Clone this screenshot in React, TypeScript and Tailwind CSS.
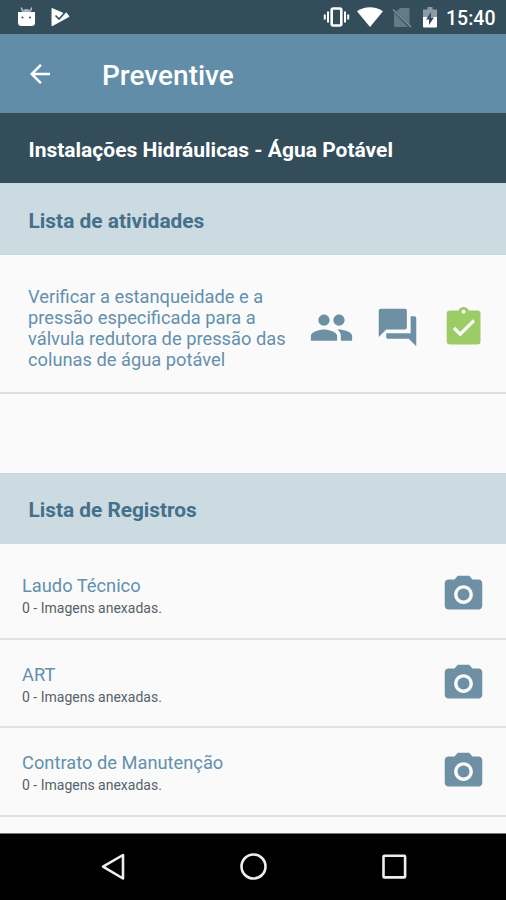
import { MdArrowBack, MdForum, MdPeople, MdPhotoCamera } from 'react-icons/md';

const records = ['Laudo Técnico', 'ART', 'Contrato de Manutenção'];

const AndroidHead = () => (
  <svg className="ml-[18px] h-[20px] w-[17px]" viewBox="0 0 17 20" fill="#fff">
    <path d="M3.300 .5 4.500 4M13.700 .5 12.500 4" stroke="#b9c4ca" strokeWidth="1.500" />
    <path d="M4 6a4.500 4 0 0 1 9 0z" fill="#a9b7be" />
    <path d="M0 5h17V15.500a3.500 3.500 0 0 1-3.500 3.500h-10A3.500 3.500 0 0 1 0 15.500z" />
    <circle cx="4.500" cy="10.500" r="1" fill="#334d5a" />
    <circle cx="12" cy="10.500" r="1" fill="#334d5a" />
  </svg>
);

const PlayCheck = () => (
  <svg className="ml-4 h-[20px] w-[19px]" viewBox="0 0 19 20">
    <path d="M1 1.500v17.300L18 9.500l-3-4-2.500 1z" fill="#fff" stroke="#fff" strokeWidth="1" strokeLinejoin="round" />
    <path d="m4.500 8.500 3.500 3.500 6.500-7" fill="none" stroke="#334d5a" strokeWidth="1.600" />
  </svg>
);

const ClipboardCheck = () => (
  <svg className="h-[45px] w-[45px]" viewBox="0 0 45 45">
    <path
      d="M9 5.600h8.400a5.600 5.600 0 0 1 10.400 0h8.400a3.300 3.300 0 0 1 3.300 3.300v27.300a3.300 3.300 0 0 1-3.300 3.300H9a3.300 3.300 0 0 1-3.300-3.300V8.900A3.300 3.300 0 0 1 9 5.600z"
      fill="#9ccc65"
    />
    <circle cx="22.600" cy="6.700" r="2" fill="#fafafa" />
    <path d="m13 23 6.200 6.200L33 15.500" fill="none" stroke="#fafafa" strokeWidth="3.300" />
  </svg>
);

const StatusBar = () => (
  <div className="flex h-[34px] shrink-0 items-center bg-[#334d5a] text-white">
    <AndroidHead />
    <PlayCheck />
    <div className="ml-auto flex items-center pr-[11px]">
      <svg className="h-[20px] w-[27px]" viewBox="0 0 27 20" fill="none" stroke="#fff">
        <rect x="8.700" y="1.500" width="9.600" height="17" rx="1.500" strokeWidth="2.600" />
        <path d="M5 4.500v11M22 4.500v11" strokeWidth="2" />
        <path d="M1.800 7.500v5M25.200 7.500v5" strokeWidth="2" />
      </svg>
      <svg className="ml-[7px] h-[20px] w-[26px]" viewBox="0 0 26 20" fill="#fff">
        <path d="M0 4.200C7.500-1.200 18.500-1.200 26 4.200L13 20z" />
      </svg>
      <svg className="ml-[9px] h-[21px] w-[20px]" viewBox="0 0 20 21">
        <path d="M8 1h8.500q1 0 1 1v15.500L4.500 4.500z" fill="#667a84" />
        <path d="M2 5.500 16 20H3q-1 0-1-1z" fill="#667a84" />
        <path d="m1 2.500 18 17.500" stroke="#7d8f98" strokeWidth="1.600" />
      </svg>
      <svg className="ml-[11px] h-[21px] w-[14px]" viewBox="0 0 14 21">
        <path d="M4.500 0h5v2.500H14V10H0V2.500h4.500z" fill="#8c9ca4" />
        <path d="M0 10h14v9.500q0 1-1 1H1q-1 0-1-1z" fill="#fff" />
        <path d="M8 5v5.500h3L6 18v-5.500H3z" fill="#334d5a" />
      </svg>
      <span className="ml-[9px] w-[49px] pt-[3px] text-[19.500px] font-medium leading-none whitespace-nowrap">15:40</span>
    </div>
  </div>
);

const NavigationBar = () => (
  <div className="flex h-[67px] shrink-0 items-center justify-center gap-[113px] border-t border-[#777] bg-black">
    <svg className="h-7 w-7" viewBox="0 0 28 28" fill="none" stroke="#eee" strokeWidth="2.600" strokeLinejoin="round">
      <path d="M25 2v23.500L5 13.700z" />
    </svg>
    <svg className="h-7 w-7" viewBox="0 0 28 28" fill="none" stroke="#eee" strokeWidth="2.600">
      <circle cx="14.500" cy="13.500" r="12" />
    </svg>
    <svg className="h-7 w-7" viewBox="0 0 28 28" fill="none" stroke="#eee" strokeWidth="2.600">
      <rect x="3.500" y="2.800" width="21.600" height="21.600" rx="1" />
    </svg>
  </div>
);

export default function App() {
  return (
    <div className="flex h-[900px] w-[506px] flex-col overflow-hidden bg-[#fafafa] font-[Roboto,sans-serif]">
      <StatusBar />

      {/* App bar */}
      <header className="flex h-[79px] shrink-0 items-center bg-[#628da8] pl-[25px] text-white">
        <MdArrowBack className="h-[30px] w-[30px]" />
        <h1 className="ml-[47px] pt-[4px] text-[28px] font-medium leading-none">Preventive</h1>
      </header>

      <div className="flex h-[70px] shrink-0 items-center bg-[#334d5a] pt-[5px] pl-[28.500px] text-[21px] font-bold text-white">
        <span>Instalações Hidráulicas - Água Potável</span>
      </div>

      {/* Activities */}
      <h2 className="flex h-[72px] shrink-0 items-center bg-[#ccdae1] pt-[5px] pl-[28.500px] text-[20.900px] font-bold text-[#44708c]">
        Lista de atividades
      </h2>
      <div className="flex h-[139px] shrink-0 items-center border-b-2 border-[#dedede] pr-[20.500px] pl-7 text-[#6d90a4]">
        <p className="w-[270px] pt-[8px] text-[18.300px] leading-[21px] text-[#6390ad]">
          Verificar a estanqueidade e a<br />
          pressão especificada para a<br />
          válvula redutora de pressão das<br />
          colunas de água potável
        </p>
        <div className="ml-auto flex gap-[21px] pt-[8px]">
          <MdPeople className="h-[45px] w-[45px]" />
          <MdForum className="h-[45px] w-[45px]" />
          <ClipboardCheck />
        </div>
      </div>

      {/* Records */}
      <h2 className="mt-[79px] flex h-[71px] shrink-0 items-center bg-[#ccdae1] pt-[4px] pl-[28.500px] text-[20.800px] font-bold text-[#44708c]">
        Lista de Registros
      </h2>
      <div className="flex min-h-0 grow flex-col pt-[7px]">
        {records.map((name) => (
          <div key={name} className="flex h-[88.500px] shrink-0 items-center border-b-2 border-[#e2e2e2] pr-[20.500px] pl-[22px]">
            <div className="pt-[5px]">
              <div className="text-[18.300px] leading-[22px] text-[#6390ad]">{name}</div>
              <div className="mt-px text-[14px] leading-[20px] text-[#566169]">0 - Imagens anexadas.</div>
            </div>
            <MdPhotoCamera className="mt-px ml-auto h-[45px] w-[45px] text-[#6d90a4]" />
          </div>
        ))}
      </div>

      <NavigationBar />
    </div>
  );
}
